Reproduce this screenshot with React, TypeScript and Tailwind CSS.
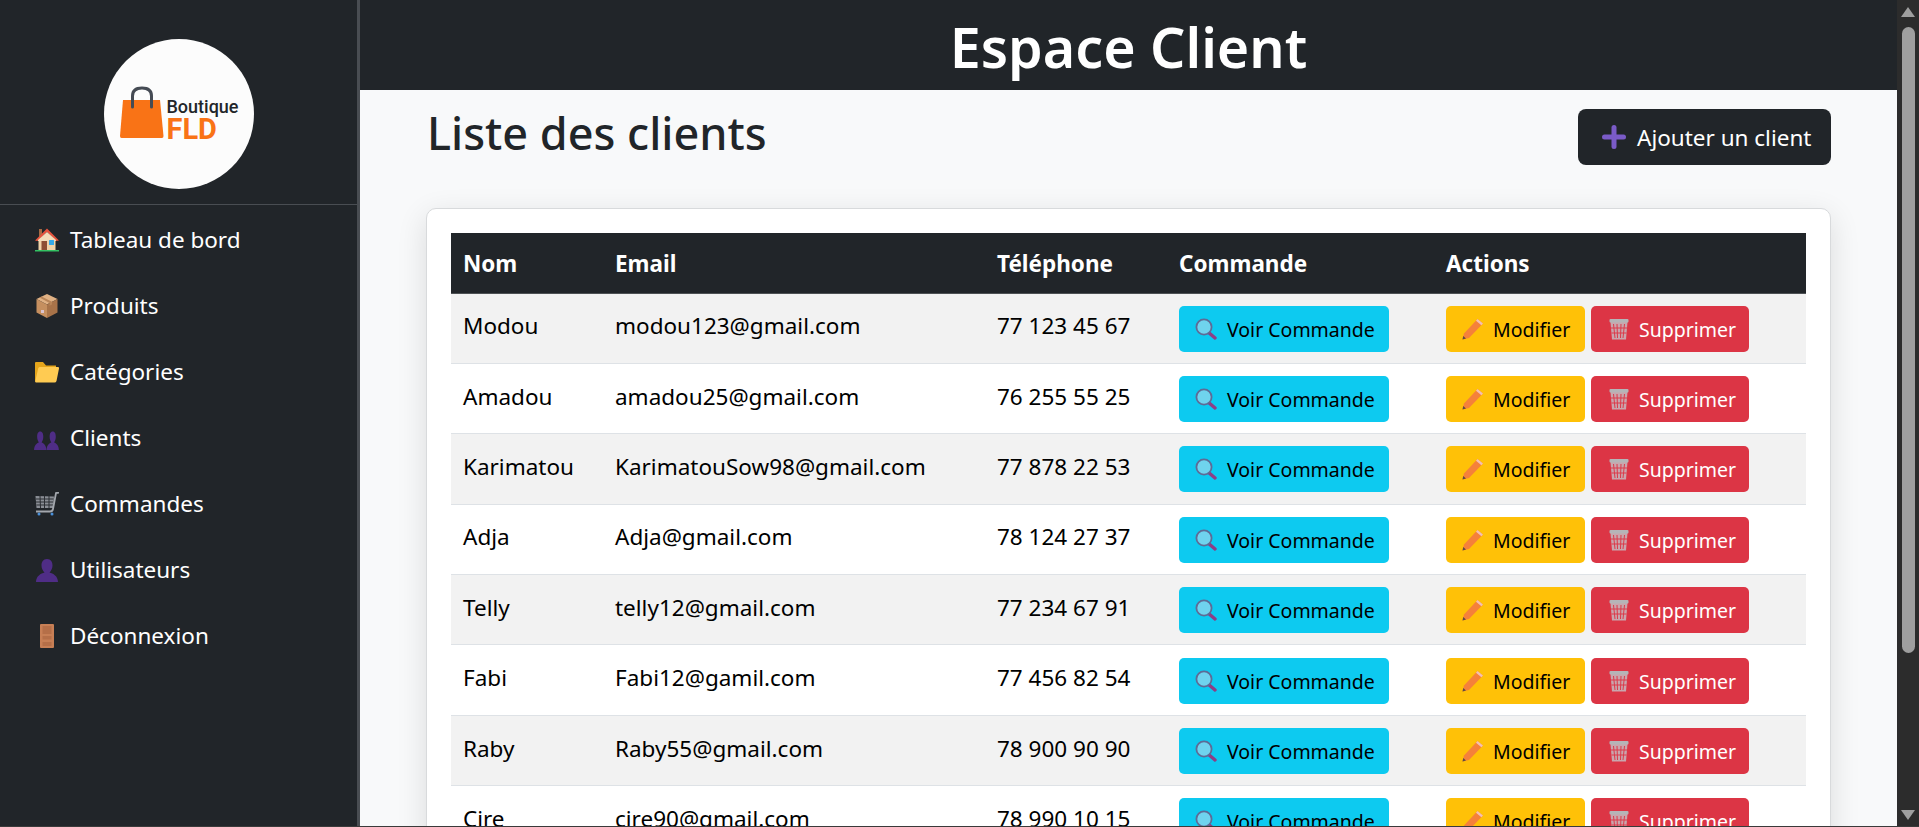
import { type ReactElement } from "react";

const clients = [
  { nom: "Modou", email: "modou123@gmail.com", tel: "77 123 45 67" },
  { nom: "Amadou", email: "amadou25@gmail.com", tel: "76 255 55 25" },
  { nom: "Karimatou", email: "KarimatouSow98@gmail.com", tel: "77 878 22 53" },
  { nom: "Adja", email: "Adja@gmail.com", tel: "78 124 27 37" },
  { nom: "Telly", email: "telly12@gmail.com", tel: "77 234 67 91" },
  { nom: "Fabi", email: "Fabi12@gamil.com", tel: "77 456 82 54" },
  { nom: "Raby", email: "Raby55@gmail.com", tel: "78 900 90 90" },
  { nom: "Cire", email: "cire90@gmail.com", tel: "78 990 10 15" },
];

function HouseIcon(): ReactElement {
  return (
    <svg width="24" height="24" viewBox="0 0 24 24" className="shrink-0">
      <rect x="4" y="1" width="3" height="8" fill="#a56a43" />
      <rect x="3.5" y="10" width="17" height="12" fill="#f1d3a8" />
      <path d="M12 0.5 L24 12.5 L21.5 13 L12 4 L2.5 13 L0 12.5 Z" fill="#e5533d" />
      <path d="M12 4 L21 12 L21 13 L3 13 L3 12 Z" fill="#f4dcb8" />
      <rect x="6.5" y="13" width="5.5" height="9" fill="#8d4f35" />
      <rect x="14" y="12" width="5" height="5" rx="0.5" fill="#35a9e8" />
      <rect x="0" y="22" width="24" height="1.5" fill="#33c263" />
    </svg>
  );
}

function BoxIcon(): ReactElement {
  return (
    <svg width="24" height="24" viewBox="0 0 24 24" className="shrink-0">
      <path d="M12 0 L22.5 5 L12 10.5 L1.5 5 Z" fill="#e0b184" />
      <path d="M1.5 5 L12 10.5 L12 24 L1.5 18.5 Z" fill="#c58f5f" />
      <path d="M22.5 5 L12 10.5 L12 24 L22.5 18.5 Z" fill="#a87349" />
      <path d="M6.5 2.5 L17 7.8 L17 10.5 L14.5 11.7 L14.5 9 L4.5 3.5 Z" fill="#b98558" />
      <rect x="6" y="16" width="3" height="3" fill="#d9c3cf" />
    </svg>
  );
}

function FolderIcon(): ReactElement {
  return (
    <svg width="24" height="24" viewBox="0 0 24 24" className="shrink-0">
      <path d="M0 3 Q0 2 1 2 L8 2 L11 5.5 L21 5.5 L21 21 L1 22 Q0 22 0 21 Z" fill="#e5a51b" />
      <path d="M5 7 L23 7 Q24.5 7 24 8.5 L21.5 21 Q21 22.5 19.5 22.5 L1 22.5 Q0 22.5 0.3 21 L3.3 8 Q3.8 7 5 7 Z" fill="#ffcb52" />
    </svg>
  );
}

function BustIcon({ x = 0, sx = 1, sy = 1 }: { x?: number; sx?: number; sy?: number }): ReactElement {
  return (
    <g transform={`translate(${x} ${24 - 24 * sy}) scale(${sx} ${sy})`}>
      <path d="M12 1 C16 1 17.5 4 17.5 7.5 C17.5 10.5 16 13 14.5 14.5 C18 15.5 23 18 23 24 L1 24 C1 18 6 15.5 9.5 14.5 C8 13 6.5 10.5 6.5 7.5 C6.5 4 8 1 12 1 Z" fill="#4f2d86" />
    </g>
  );
}

function BustsIcon(): ReactElement {
  return (
    <svg width="25" height="24" viewBox="0 0 25 24" className="-ml-[1px] shrink-0">
      <BustIcon x={-0.5} sx={0.56} sy={0.8} />
      <BustIcon x={12} sx={0.56} sy={0.8} />
    </svg>
  );
}

function SingleBustIcon(): ReactElement {
  return (
    <svg width="24" height="24" viewBox="0 0 24 24" className="shrink-0">
      <BustIcon />
    </svg>
  );
}

function CartIcon(): ReactElement {
  return (
    <svg width="24" height="24" viewBox="0 0 24 24" fill="none" className="shrink-0">
      <path d="M0.5 4 L19 4.5 L18 16 L1.5 16 Z" fill="#8b8f96" />
      <path d="M1 7 L18.5 7 M1 10 L18 10 M1.5 13 L18 13 M5 4 L5.5 16 M9.5 4 L9.5 16 M14 4 L14 16" stroke="#2b2e33" strokeWidth="1" />
      <path d="M24 0.5 L21 1 L18 17 Q17.5 19.5 15 19.5 L1 19.5" stroke="#a3a7ad" strokeWidth="1.8" />
      <circle cx="4" cy="22" r="1.5" fill="#4a90d9" />
      <circle cx="17" cy="22" r="1.5" fill="#4a90d9" />
    </svg>
  );
}

function DoorIcon(): ReactElement {
  return (
    <svg width="24" height="24" viewBox="0 0 24 24" className="shrink-0">
      <rect x="5" y="0" width="14" height="24" rx="1" fill="#c77f55" />
      <rect x="7.5" y="2" width="9" height="8" fill="#b56f48" />
      <rect x="7.5" y="12" width="9" height="3.5" fill="#b56f48" />
      <rect x="7.5" y="18" width="9" height="4" fill="#b56f48" />
    </svg>
  );
}

function SearchIcon(): ReactElement {
  return (
    <svg width="22" height="22" viewBox="0 0 22 22" className="shrink-0">
      <path d="M13 14 L20 20" stroke="#8c3f86" strokeWidth="3.4" strokeLinecap="round" />
      <circle cx="9" cy="9" r="7.6" fill="#6fd3ee" stroke="#5e6b96" strokeWidth="1.8" />
    </svg>
  );
}

function PencilIcon(): ReactElement {
  return (
    <svg width="22" height="22" viewBox="0 0 22 22" className="shrink-0">
      <path d="M0.5 21.5 L2 15.5 L15.5 1 L21 5.5 L7 20 Z" fill="#f5813a" />
      <path d="M14 2.7 L15.5 1 L21 5.5 L19.4 7.2 Z" fill="#f3c1b3" />
      <path d="M0.5 21.5 L1.2 18 L4 20.6 Z" fill="#5f4a42" />
    </svg>
  );
}

function TrashIcon(): ReactElement {
  return (
    <svg width="22" height="22" viewBox="0 0 22 22" className="shrink-0">
      <path d="M2.5 4 L19.5 4 L18 21.5 L4 21.5 Z" fill="#c9a6ad" />
      <path d="M5.5 6 L7 20 M9 6 L9.5 20 M13 6 L12.5 20 M16.5 6 L15 20 M3 10 L19 10 M3.5 15 L18.5 15" stroke="#dd3a4a" strokeWidth="1" />
      <rect x="1.5" y="1" width="19" height="3.5" rx="1" fill="#b5b5b8" />
    </svg>
  );
}

function PlusIcon(): ReactElement {
  return (
    <svg width="24" height="24" viewBox="0 0 24 24" className="shrink-0">
      <rect x="0" y="9.5" width="24" height="5" rx="2.5" fill="#7a5bc7" />
      <rect x="9.5" y="0" width="5" height="24" rx="2.5" fill="#7a5bc7" />
    </svg>
  );
}

const navItems: { label: string; icon: ReactElement }[] = [
  { label: "Tableau de bord", icon: <HouseIcon /> },
  { label: "Produits", icon: <BoxIcon /> },
  { label: "Catégories", icon: <FolderIcon /> },
  { label: "Clients", icon: <BustsIcon /> },
  { label: "Commandes", icon: <CartIcon /> },
  { label: "Utilisateurs", icon: <SingleBustIcon /> },
  { label: "Déconnexion", icon: <DoorIcon /> },
];

function Logo(): ReactElement {
  return (
    <div className="flex h-[150px] w-[150px] items-center gap-[3px] rounded-full bg-[#fcfcfc] pl-[16px]">
      <svg width="44" height="52" viewBox="0 0 44 52" className="mt-[-5px] shrink-0">
        <path d="M3 14 L40 14 L43.5 50 Q43.5 52 42 52 L1.5 52 Q0 52 0 50 Z" fill="#f97316" />
        <path d="M12.5 21 L12.5 10 Q12.5 2 22 2 Q31.5 2 31.5 10 L31.5 21" fill="none" stroke="#454b54" strokeWidth="3" strokeLinecap="round" />
      </svg>
      <div className="mt-[11px] flex flex-col font-['Roboto',sans-serif] leading-none">
        <span className="text-[18px] font-medium leading-[18px] text-[#222529]">Boutique</span>
        <span className="text-[29px] font-bold leading-[26px] text-[#f97316]">FLD</span>
      </div>
    </div>
  );
}

function ClientRow({ nom, email, tel, index }: { nom: string; email: string; tel: string; index: number }): ReactElement {
  return (
    <tr className={`h-[70.4px] border-b border-[#dee2e6] text-[22.5px] text-black ${index % 2 === 0 ? "bg-[#f2f2f2]" : "bg-white"}`}>
      <td className="pb-[4px] pl-[12px]">{nom}</td>
      <td className="pb-[4px] pl-[13px]">{email}</td>
      <td className="pb-[4px] pl-[13px]">{tel}</td>
      <td className="pl-[13px] pt-[1px]">
        <button className="flex h-[46px] w-[210px] items-center gap-[10px] whitespace-nowrap rounded-[5px] bg-[#0dcaf0] pl-[16px] text-[19.5px] text-black">
          <SearchIcon />
          <span className="pt-[1px]">Voir Commande</span>
        </button>
      </td>
      <td className="pl-[13px] pt-[1px]">
        <div className="flex gap-[6px]">
          <button className="flex h-[46px] w-[139px] items-center gap-[9px] whitespace-nowrap rounded-[5px] bg-[#ffc107] pl-[16px] text-[19.5px] text-black">
            <PencilIcon />
            <span className="pt-[1px]">Modifier</span>
          </button>
          <button className="flex h-[46px] w-[158px] items-center gap-[9px] whitespace-nowrap rounded-[5px] bg-[#dc3545] pl-[17px] text-[19.5px] text-white">
            <TrashIcon />
            <span className="pt-[1px]">Supprimer</span>
          </button>
        </div>
      </td>
    </tr>
  );
}

export default function App(): ReactElement {
  return (
    <div className="flex h-screen w-full overflow-hidden border-b border-[#3a3a3a] bg-[#f8f9fa] font-['Noto_Sans',sans-serif] text-[#212529]">
      <aside className="h-full w-[360px] shrink-0 border-r-[3px] border-[#494d52] bg-[#212529] text-white">
        <div className="flex h-[205px] items-start justify-center border-b border-[#494d52] pt-[39px]">
          <Logo />
        </div>
        <nav className="flex flex-col pt-[2px]">
          {navItems.map((item) => (
            <a key={item.label} className="flex h-[66px] items-center gap-[11px] pl-[35px] text-[22.5px]">
              {item.icon}
              {item.label}
            </a>
          ))}
        </nav>
      </aside>

      <div className="flex h-full min-w-0 flex-1 flex-col">
        <header className="flex h-[90px] shrink-0 items-center justify-center bg-[#212529] pt-[4px] text-[55.5px] font-semibold text-white">
          Espace Client
        </header>
        <main className="flex-1 overflow-hidden pl-[66px] pr-[66px]">
          <div className="flex items-start justify-between pt-[19px]">
            <h1 className="-mt-[3px] pl-[1px] text-[45px] font-medium leading-[54px]">Liste des clients</h1>
            <button className="flex h-[56px] w-[253px] items-center gap-[11px] whitespace-nowrap rounded-[8px] bg-[#212529] pl-[24px] text-[22.5px] text-white">
              <PlusIcon />
              <span className="pt-[2px]">Ajouter un client</span>
            </button>
          </div>
          <div className="mt-[43px] rounded-[10px] border border-[#d8dadc] bg-white pb-[24px] pl-[24px] pr-[24px] pt-[24px] shadow-[0_8px_30px_rgba(0,0,0,0.12)]">
            <table className="w-full table-fixed border-collapse text-left">
              <thead>
                <tr className="h-[60px] border-b border-[#4d5154] bg-[#212529] text-[22.5px] font-bold text-white">
                  <th className="w-[151px] pl-[12px] pt-[2px]">Nom</th>
                  <th className="w-[382px] pl-[13px] pt-[2px]">Email</th>
                  <th className="w-[182px] pl-[13px] pt-[2px]">Téléphone</th>
                  <th className="w-[267px] pl-[13px] pt-[2px]">Commande</th>
                  <th className="pl-[13px] pt-[2px]">Actions</th>
                </tr>
              </thead>
              <tbody>
                {clients.map((client, index) => (
                  <ClientRow key={client.nom} {...client} index={index} />
                ))}
              </tbody>
            </table>
          </div>
        </main>
      </div>

      <div className="flex h-full w-[22px] shrink-0 flex-col items-center bg-[#2c2c2c] pb-[6px] pt-[7px]">
        <div className="h-0 w-0 border-x-[7px] border-b-[10px] border-x-transparent border-b-[#9f9f9f]" />
        <div className="mt-[10px] h-[626px] w-[13px] rounded-full bg-[#9f9f9f]" />
        <div className="mt-auto h-0 w-0 border-x-[7px] border-t-[10px] border-x-transparent border-t-[#9f9f9f]" />
      </div>
    </div>
  );
}
